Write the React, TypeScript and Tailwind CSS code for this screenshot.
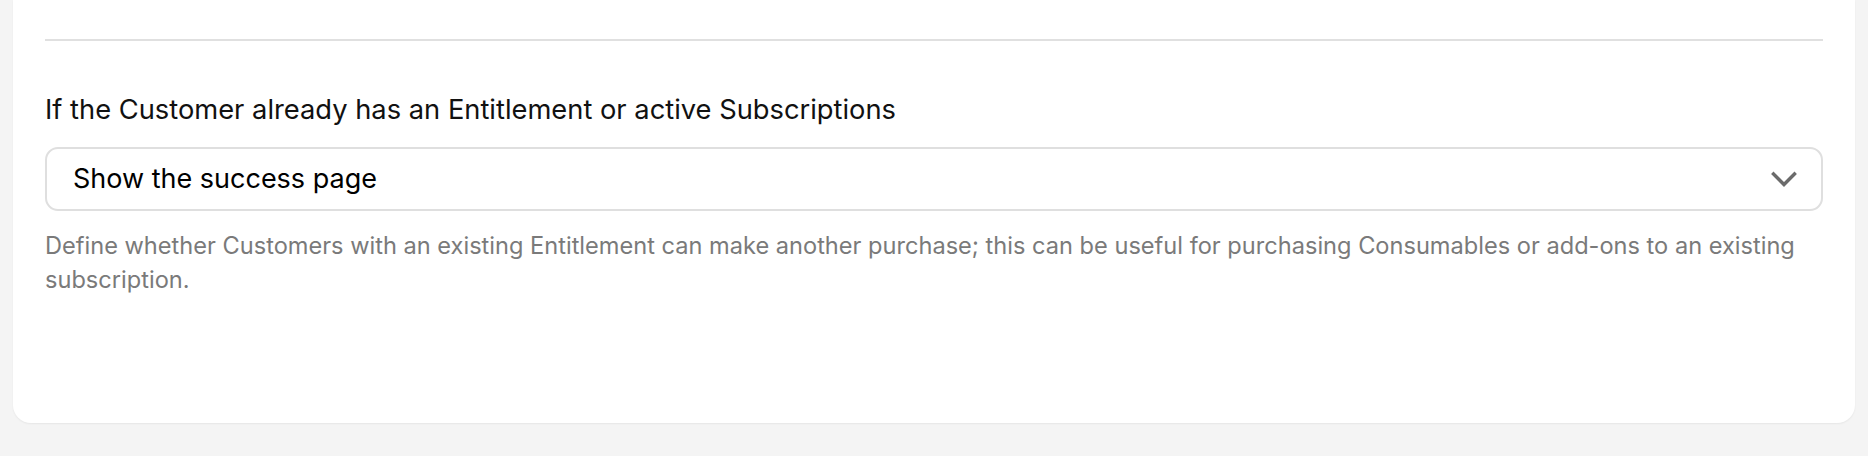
export default function App() {
  return (
    <div
      className="w-[1868px] h-[456px] bg-[#f4f4f4] px-[13px]"
      style={{ fontFamily: "Inter, 'Noto Sans', sans-serif" }}
    >
      {/* card — top edge is cut off by the screenshot */}
      <div className="bg-white rounded-b-[18px] shadow-[0_1px_2px_rgba(0,0,0,0.06)] px-[32px] pt-[39px] h-[423px]">
        <div className="h-[2px] bg-[#e0e0e0]" />

        <div className="pt-[51px]">
          <label className="block text-[27.3px] leading-[36px] text-[#111]">
            If the Customer already has an Entitlement or active Subscriptions
          </label>

          <div className="mt-[19px] h-[64px] rounded-[13px] border-2 border-[#dfdfdf] flex items-center justify-between pl-[26px] pr-[24px]">
            <span className="text-[27px] text-black">Show the success page</span>
            <svg width="26" height="17" viewBox="0 0 26 17" fill="none">
              <polyline
                points="2.5,3 13,13.5 23.5,3"
                stroke="#6b6b6b"
                strokeWidth="3.4"
                strokeLinecap="square"
                strokeLinejoin="miter"
              />
            </svg>
          </div>

          <p className="mt-[18px] text-[23.6px] leading-[34px] text-[#7a7a7a]">
            Define whether Customers with an existing Entitlement can make another purchase; this can be useful for
            purchasing Consumables or add-ons to an existing subscription.
          </p>
        </div>
      </div>
    </div>
  );
}
